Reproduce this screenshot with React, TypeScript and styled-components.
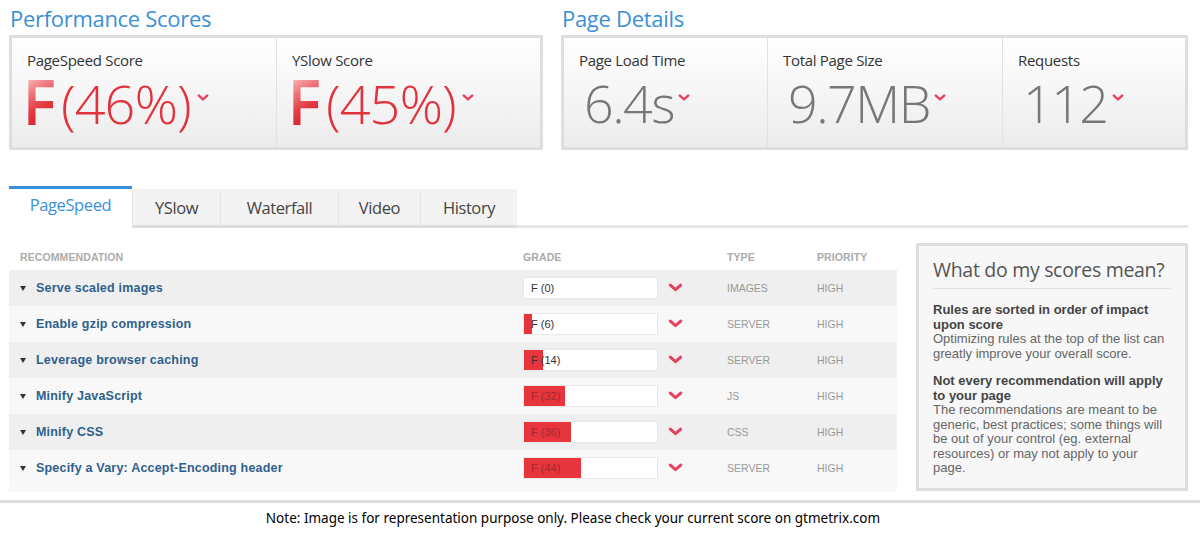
import styled, { createGlobalStyle } from 'styled-components'

const GlobalStyle = createGlobalStyle`
  body {
    margin: 0;
    background: #fff;
    font-family: 'Liberation Sans', Arial, sans-serif;
  }
`

const display = `'Open Sans', 'Lato', sans-serif`

const Page = styled.div`
  width: 1200px;
  display: flex;
  flex-direction: column;
`

const Main = styled.div`
  padding: 0 12px 0 9px;
  display: flex;
  flex-direction: column;
`

const Summary = styled.div`
  display: flex;
  gap: 18px;
`

const Section = styled.section<{ $width: number }>`
  width: ${({ $width }) => $width}px;
  display: flex;
  flex-direction: column;
`

const SectionTitle = styled.h2`
  margin: 0;
  height: 35px;
  padding-left: 1px;
  font-family: ${display};
  font-weight: 400;
  font-size: 22px;
  line-height: 37px;
  color: #3b8fd8;
  letter-spacing: -0.3px;
`

const Panel = styled.div<{ $cols: string }>`
  height: 115px;
  box-sizing: border-box;
  border: 3px solid #dedede;
  display: grid;
  grid-template-columns: ${({ $cols }) => $cols};
  background: linear-gradient(#ffffff, #ececec);
`

const Cell = styled.div`
  padding: 12px 0 0 15px;
  border-left: 1px solid #e2e2e2;
  overflow: hidden;
  &:first-child {
    border-left: none;
  }
`

const CellLabel = styled.div`
  font-family: ${display};
  font-size: 15px;
  line-height: 20px;
  color: #333;
  letter-spacing: -0.3px;
  height: 20px;
`

const ValueLine = styled.div`
  display: flex;
  align-items: center;
  height: 58px;
  margin-top: 4px;
`

const GradeLetter = styled.span`
  display: inline-block;
  font-family: 'Liberation Sans', Arial, sans-serif;
  font-weight: 700;
  font-size: 64px;
  line-height: 58px;
  background: linear-gradient(155deg, #fbd0d2 0%, #f07d83 28%, #e23a43 55%, #cc1822 100%);
  -webkit-background-clip: text;
  background-clip: text;
  color: transparent;
  transform: scaleX(0.78);
  transform-origin: left center;
  margin: 0 -3px 0 -2px;
`

const Percent = styled.span`
  font-family: ${display};
  font-weight: 300;
  font-size: 54px;
  line-height: 58px;
  color: #e2333c;
  letter-spacing: -1px;
`

const Metric = styled.span`
  font-family: ${display};
  font-weight: 300;
  font-size: 52px;
  line-height: 58px;
  color: #777;
  letter-spacing: -1.5px;
  margin-left: 5px;
`

const ChevronIcon = styled.svg<{ $size: number }>`
  width: ${({ $size }) => $size}px;
  height: ${({ $size }) => $size * 0.62}px;
  flex: none;
`

const Chevron = ({ size = 12, offset = 0, lift = 10 }: { size?: number; offset?: number; lift?: number }) => (
  <ChevronIcon $size={size} viewBox="0 0 14 9" style={{ marginLeft: offset, marginTop: -lift }}>
    <polyline points="2,2 7,6.5 12,2" fill="none" stroke="#e4455e" strokeWidth="3" strokeLinecap="round" strokeLinejoin="round" />
  </ChevronIcon>
)

const TabBar = styled.div`
  margin-top: 36px;
  display: flex;
  align-items: flex-end;
  height: 42px;
`

const Tab = styled.div<{ $active?: boolean; $width: number }>`
  width: ${({ $width }) => $width}px;
  height: ${({ $active }) => ($active ? 42 : 39)}px;
  box-sizing: border-box;
  display: flex;
  align-items: center;
  justify-content: center;
  font-family: ${display};
  font-size: 16.5px;
  letter-spacing: -0.4px;
  color: ${({ $active }) => ($active ? '#3b8fd8' : '#444')};
  background: ${({ $active }) => ($active ? '#fff' : '#f3f3f3')};
  border-top: 3px solid ${({ $active }) => ($active ? '#3b8fd8' : '#f3f3f3')};
  border-left: ${({ $active }) => ($active ? 'none' : '1px solid #e4e4e4')};
  border-bottom: 3px solid ${({ $active }) => ($active ? '#fff' : '#dcdcdc')};
  padding-bottom: ${({ $active }) => ($active ? 5 : 3)}px;
`

const TabRest = styled.div`
  flex: 1;
  border-bottom: 3px solid #e6e6e6;
`

const Content = styled.div`
  margin-top: 15px;
  display: flex;
  gap: 19px;
  align-items: flex-start;
`

const Table = styled.div`
  width: 888px;
  display: flex;
  flex-direction: column;
  padding-bottom: 6px;
  background: #f9f9f9;
`

const GridRow = styled.div`
  display: grid;
  grid-template-columns: 503px 135px 69px 90px 1fr;
  align-items: center;
  padding-left: 11px;
`

const HeaderRow = styled(GridRow)`
  height: 27px;
  background: #fff;
  font-size: 10.5px;
  font-weight: 700;
  color: #ababab;
  letter-spacing: 0.1px;
`

const Row = styled(GridRow)<{ $shade: boolean }>`
  height: 36px;
  background: ${({ $shade }) => ($shade ? '#efefef' : '#f8f8f8')};
`

const RuleName = styled.div`
  display: flex;
  align-items: center;
  gap: 10px;
  font-size: 12.5px;
  font-weight: 700;
  color: #2f5f8d;
  letter-spacing: 0.2px;
`

const Caret = styled.span`
  width: 0;
  height: 0;
  border-left: 3.5px solid transparent;
  border-right: 3.5px solid transparent;
  border-top: 5px solid #333;
`

const GradeBar = styled.div<{ $dark: boolean }>`
  height: 22px;
  box-sizing: border-box;
  border: 1px solid #e8e8e8;
  display: flex;
  align-items: center;
  padding-left: 7px;
  font-size: 11px;
  color: ${({ $dark }) => ($dark ? '#9c2d32' : '#333')};
`

const ChevronCell = styled.div`
  display: flex;
  padding-left: 10px;
  padding-top: 10px;
`

const Plain = styled.div`
  font-size: 10.5px;
  color: #999;
`

const Aside = styled.aside`
  width: 272px;
  height: 248px;
  box-sizing: border-box;
  border: 3px solid #dedede;
  background: #f7f7f7;
  padding: 10px 14px 0 14px;
`

const AsideTitle = styled.h3`
  margin: 0 0 14px;
  padding-bottom: 5px;
  border-bottom: 1px solid #e1e1e1;
  font-family: ${display};
  font-weight: 400;
  font-size: 19.5px;
  letter-spacing: -0.3px;
  color: #555;
`

const Note = styled.p`
  margin: 0 0 13px;
  font-size: 13px;
  line-height: 14.5px;
  color: #666;
  strong {
    display: block;
    color: #444;
  }
`

const Footer = styled.div`
  margin-top: 8px;
  border-top: 3px solid #dddddd;
  height: 30px;
  padding-right: 54px;
  display: flex;
  align-items: center;
  justify-content: center;
  font-family: 'Noto Sans', 'Liberation Sans', sans-serif;
  font-size: 13.5px;
  color: #000;
`

const rules = [
  { name: 'Serve scaled images', score: 0, type: 'IMAGES' },
  { name: 'Enable gzip compression', score: 6, type: 'SERVER' },
  { name: 'Leverage browser caching', score: 14, type: 'SERVER' },
  { name: 'Minify JavaScript', score: 32, type: 'JS' },
  { name: 'Minify CSS', score: 36, type: 'CSS' },
  { name: 'Specify a Vary: Accept-Encoding header', score: 44, type: 'SERVER' },
]

const tabs = [
  { label: 'PageSpeed', width: 123 },
  { label: 'YSlow', width: 88 },
  { label: 'Waterfall', width: 118 },
  { label: 'Video', width: 82 },
  { label: 'History', width: 97 },
]

export default function App() {
  return (
    <Page>
      <GlobalStyle />
      <Main>
        <Summary>
          <Section $width={534}>
            <SectionTitle>Performance Scores</SectionTitle>
            <Panel $cols="264px 1fr">
              <Cell>
                <CellLabel>PageSpeed Score</CellLabel>
                <ValueLine>
                  <GradeLetter>F</GradeLetter>
                  <Percent>(46%)</Percent>
                  <Chevron offset={6} />
                </ValueLine>
              </Cell>
              <Cell>
                <CellLabel>YSlow Score</CellLabel>
                <ValueLine>
                  <GradeLetter>F</GradeLetter>
                  <Percent>(45%)</Percent>
                  <Chevron offset={6} />
                </ValueLine>
              </Cell>
            </Panel>
          </Section>
          <Section $width={627}>
            <SectionTitle>Page Details</SectionTitle>
            <Panel $cols="203px 235px 1fr">
              <Cell>
                <CellLabel>Page Load Time</CellLabel>
                <ValueLine>
                  <Metric>6.4s</Metric>
                  <Chevron offset={4} />
                </ValueLine>
              </Cell>
              <Cell>
                <CellLabel>Total Page Size</CellLabel>
                <ValueLine>
                  <Metric>9.7MB</Metric>
                  <Chevron offset={4} />
                </ValueLine>
              </Cell>
              <Cell>
                <CellLabel>Requests</CellLabel>
                <ValueLine>
                  <Metric>112</Metric>
                  <Chevron offset={4} />
                </ValueLine>
              </Cell>
            </Panel>
          </Section>
        </Summary>

        <TabBar>
          {tabs.map((t, i) => (
            <Tab key={t.label} $active={i === 0} $width={t.width}>
              {t.label}
            </Tab>
          ))}
          <TabRest />
        </TabBar>

        <Content>
          <Table>
            <HeaderRow>
              <div>RECOMMENDATION</div>
              <div>GRADE</div>
              <div />
              <div>TYPE</div>
              <div>PRIORITY</div>
            </HeaderRow>
            {rules.map((r, i) => {
              const pct = Math.round(r.score * 0.97)
              return (
                <Row key={r.name} $shade={i % 2 === 0}>
                  <RuleName>
                    <Caret />
                    {r.name}
                  </RuleName>
                  <GradeBar
                    $dark={r.score > 20}
                    style={{ background: `linear-gradient(to right, #e8343d ${pct}%, #fff ${pct}%)` }}
                  >
                    F ({r.score})
                  </GradeBar>
                  <ChevronCell>
                    <Chevron size={15} />
                  </ChevronCell>
                  <Plain>{r.type}</Plain>
                  <Plain>HIGH</Plain>
                </Row>
              )
            })}
          </Table>

          <Aside>
            <AsideTitle>What do my scores mean?</AsideTitle>
            <Note>
              <strong>Rules are sorted in order of impact upon score</strong>
              Optimizing rules at the top of the list can greatly improve your overall score.
            </Note>
            <Note>
              <strong>Not every recommendation will apply to your page</strong>
              The recommendations are meant to be generic, best practices; some things will be out of your
              control (eg. external resources) or may not apply to your page.
            </Note>
          </Aside>
        </Content>
      </Main>
      <Footer>Note: Image is for representation purpose only. Please check your current score on gtmetrix.com</Footer>
    </Page>
  )
}
